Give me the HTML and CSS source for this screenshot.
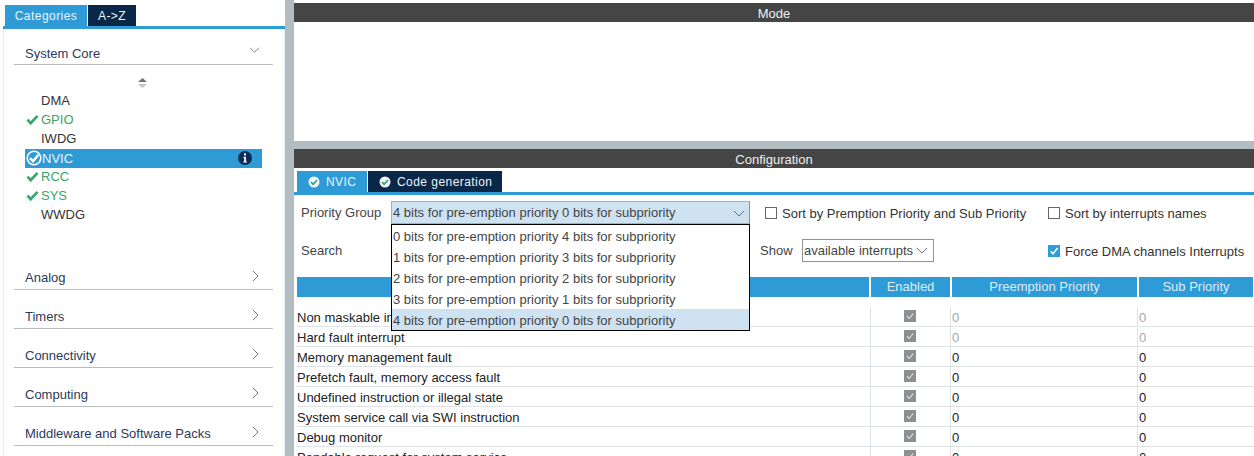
FILE: index.html
```html
<!DOCTYPE html>
<html lang="en">
<head>
<meta charset="utf-8">
<title>NVIC Configuration</title>
<link rel="stylesheet" href="styles.css">
</head>
<body>
<svg class="defs" width="0" height="0" aria-hidden="true">
  <symbol id="tick" viewBox="0 0 14 12"><path d="M1.5 6.2 5 10 12.5 2" fill="none" stroke="#3aa66d" stroke-width="3"/></symbol>
  <symbol id="down" viewBox="0 0 14 8"><path d="M1 1l6 6 6-6" fill="none" stroke="#666" stroke-width="1.1"/></symbol>
  <symbol id="right" viewBox="0 0 8 14"><path d="M1 1l6 6-6 6" fill="none" stroke="#666" stroke-width="1.1"/></symbol>
  <symbol id="ok" viewBox="0 0 12 12"><circle cx="6" cy="6" r="5.5" fill="#fff" opacity=".95"/><path d="M3 6.2 5.2 8.3 9 4" fill="none" stroke="#2ea37a" stroke-width="1.7"/></symbol>
  <symbol id="box" viewBox="0 0 12 12"><rect width="12" height="12" fill="#8c9092"/><path d="M3 6.2 5.2 8.5 9.2 3.5" fill="none" stroke="#e4e6e7" stroke-width="1.1"/></symbol>
</svg>
<div class="app">
  <aside class="side">
    <div class="tabs side-tabs">
      <span class="tab tab-on cat-tab">Categories</span>
      <span class="tab tab-off az-tab">A-&gt;Z</span>
    </div>
    <div class="side-body">
      <div class="group core">
        <span>System Core</span>
        <svg class="chev-d"><use href="#down"/></svg>
      </div>
      <svg class="sorter" viewBox="0 0 9 10"><path d="M4.5 0 9 4H0z" fill="#6f7477"/><path d="M4.5 10 9 6H0z" fill="#c3c7c9"/></svg>
      <ul class="items">
        <li class="item">DMA</li>
        <li class="item on"><svg class="tick"><use href="#tick"/></svg>GPIO</li>
        <li class="item">IWDG</li>
        <li class="item sel">
          <svg class="sel-ok" viewBox="0 0 16 16"><circle cx="8" cy="8" r="6.8" fill="none" stroke="#fff" stroke-width="1.6"/><path d="M4 8.2 7 11.2 12.5 4.8" fill="none" stroke="#fff" stroke-width="2.4"/></svg>
          <span>NVIC</span>
          <svg class="info" viewBox="0 0 14 14"><circle cx="7" cy="7" r="7" fill="#0b2c55"/><rect x="6" y="2.4" width="2" height="2" fill="#fff"/><path d="M5.4 5.8H8v4.6h1v1H5.2v-1h1V6.8h-.8z" fill="#fff"/></svg>
        </li>
        <li class="item on"><svg class="tick"><use href="#tick"/></svg>RCC</li>
        <li class="item on"><svg class="tick"><use href="#tick"/></svg>SYS</li>
        <li class="item">WWDG</li>
      </ul>
      <div class="groups">
        <div class="group"><span>Analog</span><svg class="chev-r"><use href="#right"/></svg></div>
        <div class="group"><span>Timers</span><svg class="chev-r"><use href="#right"/></svg></div>
        <div class="group"><span>Connectivity</span><svg class="chev-r"><use href="#right"/></svg></div>
        <div class="group"><span>Computing</span><svg class="chev-r"><use href="#right"/></svg></div>
        <div class="group"><span>Middleware and Software Packs</span><svg class="chev-r"><use href="#right"/></svg></div>
      </div>
    </div>
  </aside>
  <main class="main">
    <div class="bar">Mode</div>
    <div class="mode-body"></div>
    <div class="bar">Configuration</div>
    <div class="tabs conf-tabs">
      <span class="tab tab-on nvic-tab"><svg class="ok"><use href="#ok"/></svg>NVIC</span>
      <span class="tab tab-off code-tab"><svg class="ok"><use href="#ok"/></svg>Code generation</span>
    </div>
    <div class="conf">
      <div class="row-one">
        <label class="lbl pg-lbl">Priority Group</label>
        <div class="select">
          <span>4 bits for pre-emption priority 0 bits for subpriority</span>
          <svg class="chev-s"><use href="#down"/></svg>
        </div>
        <span class="check c-a"><i class="cb"></i>Sort by Premption Priority and Sub Priority</span>
        <span class="check c-b"><i class="cb"></i>Sort by interrupts names</span>
      </div>
      <div class="row-two">
        <label class="lbl search-lbl">Search</label>
        <label class="lbl show-lbl">Show</label>
        <div class="mini-select"><span>available interrupts</span><svg class="chev-m"><use href="#down"/></svg></div>
        <span class="check c-c"><svg class="cb-on" viewBox="0 0 12 12"><rect width="12" height="12" fill="#2f9dd6"/><path d="M2.6 6.2 5 8.8 9.6 3" fill="none" stroke="#fff" stroke-width="1.6"/></svg>Force DMA channels Interrupts</span>
      </div>
      <div class="options">
        <div class="opt">0 bits for pre-emption priority 4 bits for subpriority</div>
        <div class="opt">1 bits for pre-emption priority 3 bits for subpriority</div>
        <div class="opt">2 bits for pre-emption priority 2 bits for subpriority</div>
        <div class="opt">3 bits for pre-emption priority 1 bits for subpriority</div>
        <div class="opt opt-on">4 bits for pre-emption priority 0 bits for subpriority</div>
      </div>
      <div class="thead">
        <div></div><div>Enabled</div><div>Preemption Priority</div><div>Sub Priority</div>
      </div>
      <div class="tbody">
        <div class="tr off"><div>Non maskable interrupt</div><div class="en"><svg class="box"><use href="#box"/></svg></div><div>0</div><div>0</div></div>
        <div class="tr off"><div>Hard fault interrupt</div><div class="en"><svg class="box"><use href="#box"/></svg></div><div>0</div><div>0</div></div>
        <div class="tr"><div>Memory management fault</div><div class="en"><svg class="box"><use href="#box"/></svg></div><div>0</div><div>0</div></div>
        <div class="tr"><div>Prefetch fault, memory access fault</div><div class="en"><svg class="box"><use href="#box"/></svg></div><div>0</div><div>0</div></div>
        <div class="tr"><div>Undefined instruction or illegal state</div><div class="en"><svg class="box"><use href="#box"/></svg></div><div>0</div><div>0</div></div>
        <div class="tr"><div>System service call via SWI instruction</div><div class="en"><svg class="box"><use href="#box"/></svg></div><div>0</div><div>0</div></div>
        <div class="tr"><div>Debug monitor</div><div class="en"><svg class="box"><use href="#box"/></svg></div><div>0</div><div>0</div></div>
        <div class="tr"><div>Pendable request for system service</div><div class="en"><svg class="box"><use href="#box"/></svg></div><div>0</div><div>0</div></div>
      </div>
    </div>
  </main>
</div>
</body>
</html>
```
FILE: styles.css
```css
* { box-sizing: border-box; }
html, body { margin: 0; height: 456px; overflow: hidden; background: #fff; }
body { font: 13px/1 "Liberation Sans", Arial, sans-serif; color: #333; }
.defs { position: absolute; }
ul { list-style: none; margin: 0; padding: 0; }
.app { display: flex; height: 456px; }
.side { width: 285px; flex: none; padding: 5px 0 0 3px; background: #fff; }
.main { flex: 1; min-width: 0; border-left: 9px solid #b2bdc1; padding-top: 3px; background: #fff; }
.tabs { display: flex; border-bottom: 3px solid #2f9bd6; align-items: flex-end; }
.side-tabs { height: 24px; gap: 1px; padding-left: 2px; }
.tab { display: flex; align-items: center; height: 21px; color: #eaf4fa; font-size: 12px; letter-spacing: .45px; }
.tab-on { background: #2f9bd6; }
.tab-off { background: #0a2748; }
.cat-tab { width: 82px; justify-content: center; }
.az-tab { width: 48px; justify-content: center; }
.side-body { height: 427px; border-left: 1px solid #e9eeef; border-right: 1px solid #e9eeef; padding: 15px 11px 0 10px; }
.group { position: relative; height: 39px; border-bottom: 1px solid #b9bdc0; display: flex; align-items: flex-end; padding: 0 0 5px 11px; color: #2b3a5a; }
.group.core { height: 21px; padding-bottom: 4px; }
.chev-d { position: absolute; right: 13px; top: 3px; width: 11px; height: 6px; }
.chev-r { position: absolute; right: 14px; top: 19px; width: 7px; height: 12px; }
.sorter { display: block; width: 9px; height: 10px; margin: 13px 0 0 124px; }
.items { margin: 4px 0 0 11px; width: 237px; }
.item { height: 19px; line-height: 18px; padding-left: 16px; position: relative; }
.item.on { color: #3ca36c; }
.item.sel { background: #2f9bd6; color: #eaf4fa; display: flex; align-items: center; padding-left: 17px; }
.tick { position: absolute; left: 1px; top: 3px; width: 13px; height: 11px; }
.sel-ok { position: absolute; left: 1px; top: 1px; width: 16px; height: 16px; }
.info { position: absolute; right: 10px; top: 2px; width: 14px; height: 14px; }
.groups { margin-top: 26px; }
.bar { height: 19px; background: #454545; color: #eee; text-align: center; line-height: 21px; }
.mode-body { height: 127px; border-bottom: 8px solid #b2bdc1; }
.conf-tabs { height: 27px; padding-left: 3px; gap: 1px; }
.conf-tabs .tab { height: 21px; }
.nvic-tab { width: 70px; padding-left: 11px; }
.code-tab { width: 134px; padding-left: 11px; }
.ok { width: 12px; height: 12px; margin-right: 6px; }
.conf { position: relative; padding-left: 3px; }
.row-one { position: relative; height: 29px; }
.row-two { position: relative; height: 53px; }
.lbl { position: absolute; color: #444; line-height: 14px; }
.pg-lbl { left: 4px; top: 11px; }
.search-lbl { left: 4px; top: 20px; }
.show-lbl { left: 463px; top: 20px; }
.select { position: absolute; left: 94px; top: 6px; width: 359px; height: 23px; background: #cfe2f2; border: 1px solid #a9adb0; border-right-color: #8d9194; display: flex; align-items: center; padding-left: 1px; color: #444; }
.chev-s { position: absolute; right: 4px; top: 8px; width: 12px; height: 7px; }
.chev-m { position: absolute; right: 5px; top: 7px; width: 12px; height: 7px; }
.check { position: absolute; display: flex; align-items: center; gap: 5px; color: #333; height: 14px; }
.cb { display: block; width: 12px; height: 12px; border: 1px solid #666; }
.cb-on { width: 12px; height: 12px; }
.c-a { left: 468px; top: 11px; }
.c-b { left: 751px; top: 11px; }
.c-c { left: 751px; top: 20px; }
.mini-select { position: absolute; left: 505px; top: 15px; width: 132px; height: 23px; border: 1px solid #8f9396; padding: 4px 0 0 1px; color: #444; }
.options { position: absolute; left: 97px; top: 29px; width: 359px; height: 107px; background: #fff; border: 1px solid #000; z-index: 5; color: #444; }
.opt { height: 21px; line-height: 23px; padding-left: 1px; }
.opt-on { background: #cfe2f2; }
.thead { display: grid; grid-template-columns: 572px 79px 185px 114px; gap: 0 2px; height: 19px; }
.thead > div { background: #2f9bd6; color: #dcedf7; text-align: center; line-height: 20px; }
.tbody { margin-top: 11px; }
.tr { display: grid; grid-template-columns: 573px 80px 187px 116px; height: 20px; border-bottom: 1px solid #dde3e6; line-height: 21px; color: #222; }
.tr > div + div { border-left: 1px solid #dde3e6; padding-left: 1px; }
.tr.off > div + div + div { color: #a4a8aa; }
.en { display: flex; justify-content: center; padding: 3px 2px 0 0; }
.box { width: 12px; height: 12px; }
```
